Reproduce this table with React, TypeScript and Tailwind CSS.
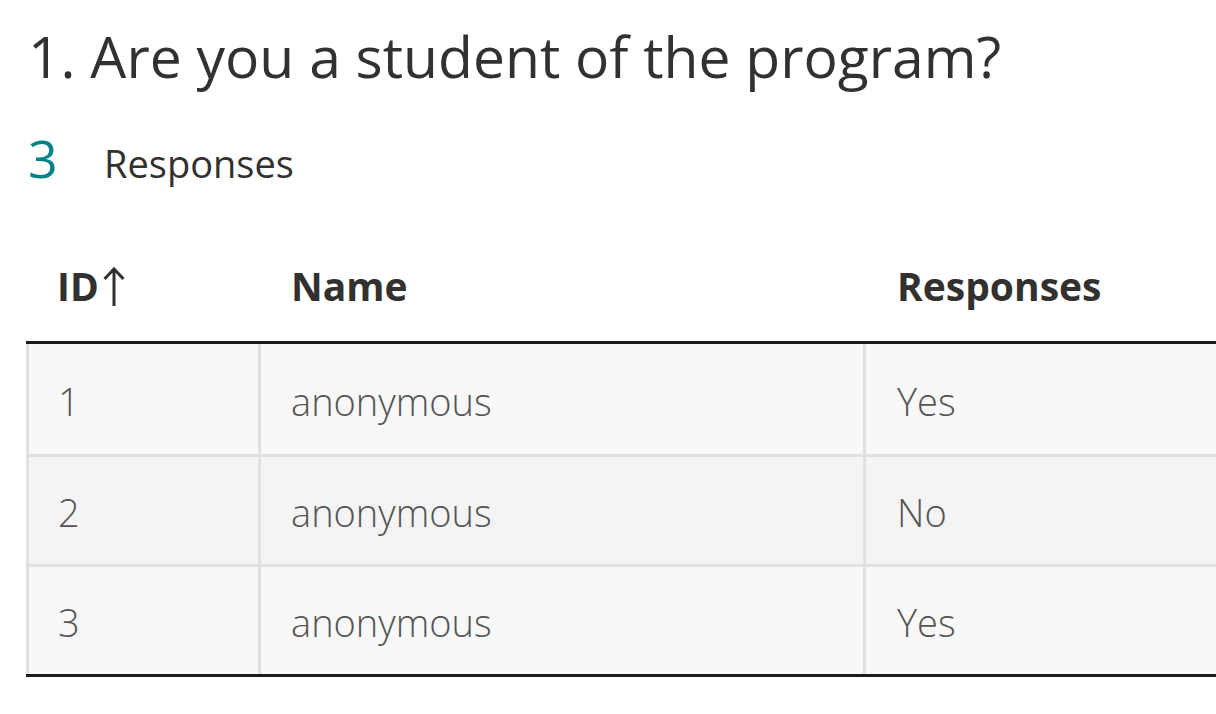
const rows = [
  { id: 1, name: "anonymous", response: "Yes" },
  { id: 2, name: "anonymous", response: "No" },
  { id: 3, name: "anonymous", response: "Yes" },
];

function SortUp() {
  return (
    <svg width="24" height="42" viewBox="0 0 24 42" className="ml-[3px]">
      <path d="M12 40V3M2.5 13L12 3l9.5 10" fill="none" stroke="#323130" strokeWidth="3" />
    </svg>
  );
}

export default function App() {
  return (
    <div
      className="h-[714px] w-[1216px] overflow-hidden bg-white"
      style={{ fontFamily: '"Open Sans", "Noto Sans", sans-serif' }}
    >
      <div className="pl-[28px] pt-[18px]">
        <h1 className="text-[57px] leading-[76px] font-normal text-[#323130]">
          1. Are you a student of the program?
        </h1>
        <div className="mt-[34px] flex items-baseline">
          <span className="w-[76px] text-[52px] leading-[60px] text-[#038387]">3</span>
          <span className="text-[38px] leading-[60px] text-[#323130]">Responses</span>
        </div>
      </div>

      <div className="ml-[26px] mt-[39px] w-[1300px]">
        <div className="grid h-[112px] grid-cols-[232px_605px_1fr] items-center border-b-[3px] border-[#1b1b1b]">
          <div className="flex items-center pl-[31px] text-[39px] font-bold text-[#323130]">
            ID
            <SortUp />
          </div>
          <div className="pl-[33px] text-[39px] font-bold text-[#323130]">Name</div>
          <div className="pl-[34px] text-[39px] font-bold text-[#323130]">Responses</div>
        </div>
        <div className="border-b-[3px] border-[#1b1b1b]">
          {rows.map((r, i) => (
            <div
              key={r.id}
              className={`grid h-[110px] grid-cols-[232px_605px_1fr] text-[38px] font-light text-[#555555] ${
                i % 2 === 1 ? "bg-[#f4f4f4]" : "bg-[#f8f8f8]"
              } ${i > 0 ? "border-t-[3px] border-[#e1e1e1]" : ""}`}
            >
              <div className="flex items-center border-l-[3px] border-[#e1e1e1] pl-[29px] pt-[4px]">{r.id}</div>
              <div className="flex items-center border-l-[3px] border-[#e1e1e1] pl-[30px] pt-[4px]">{r.name}</div>
              <div className="flex items-center border-l-[3px] border-[#e1e1e1] pl-[31px] pt-[4px]">{r.response}</div>
            </div>
          ))}
        </div>
      </div>
    </div>
  );
}
